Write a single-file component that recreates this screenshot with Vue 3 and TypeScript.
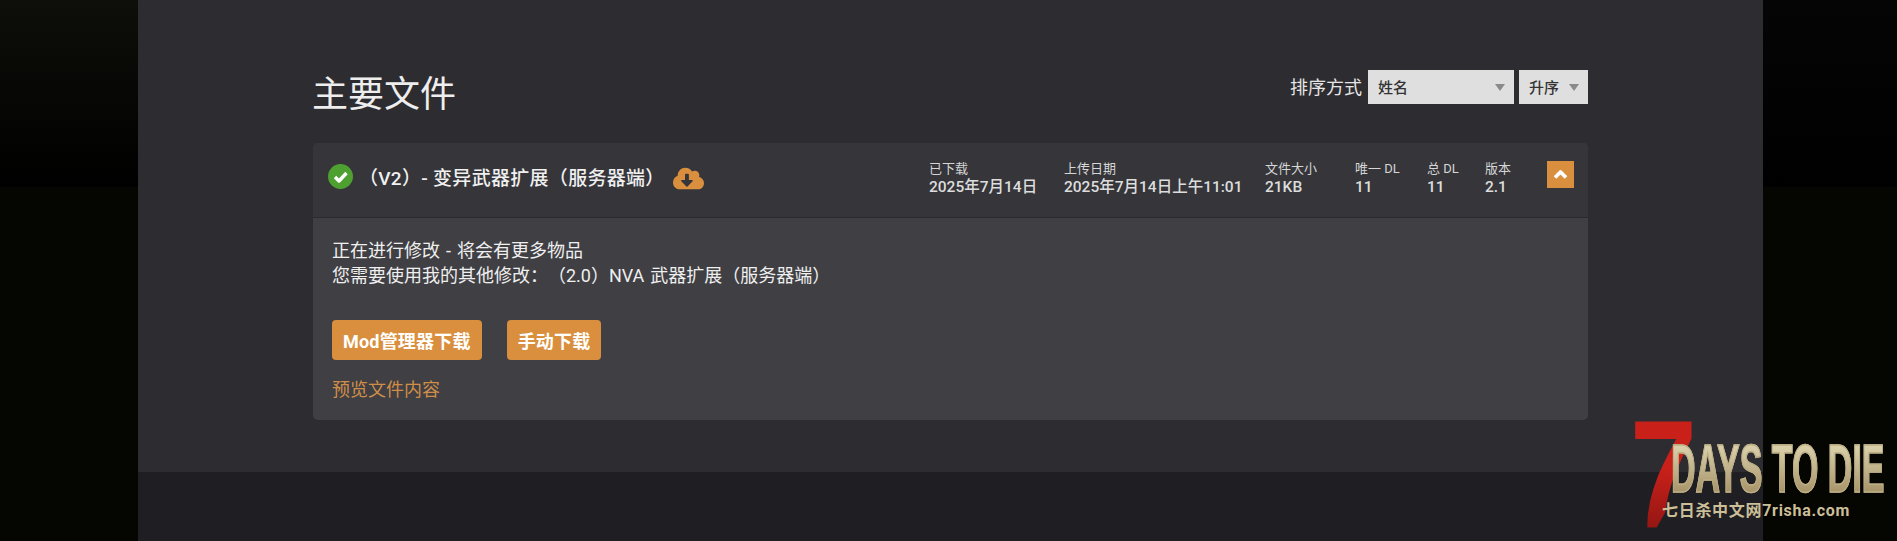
<script setup lang="ts">
interface MetaItem {
  label: string
  value: string
}

const meta: MetaItem[] = [
  { label: '已下载', value: '2025年7月14日' },
  { label: '上传日期', value: '2025年7月14日上午11:01' },
  { label: '文件大小', value: '21KB' },
  { label: '唯一 DL', value: '11' },
  { label: '总 DL', value: '11' },
  { label: '版本', value: '2.1' },
]
</script>

<template>
  <div class="page">
    <div class="side side-left" />
    <div class="center">
      <main class="content">
        <div class="head-row">
          <h2 class="title">主要文件</h2>
          <div class="sort">
            <span class="sort-label">排序方式</span>
            <div class="select select-name">
              <span>姓名</span>
              <i class="caret" />
            </div>
            <div class="select select-dir">
              <span>升序</span>
              <i class="caret" />
            </div>
          </div>
        </div>

        <section class="card">
          <header class="card-head">
            <div class="file-title">
              <svg class="ok-icon" viewBox="0 0 25 25">
                <circle cx="12.5" cy="12.5" r="12.5" fill="#4ea030" />
                <polyline points="7,13 11,17 18.5,9" fill="none" stroke="#fff" stroke-width="3.4" stroke-linejoin="round" />
              </svg>
              <span class="file-name">（V2）- 变异武器扩展（服务器端）</span>
              <svg class="cloud-icon" viewBox="0 0 640 512">
                <path
                  fill="#d98f3e"
                  d="M537.6 226.6c4.1-10.7 6.4-22.4 6.4-34.6 0-53-43-96-96-96-19.7 0-38.1 6-53.3 16.2C367 64.2 315.3 32 256 32c-88.4 0-160 71.6-160 160 0 2.7.1 5.4.2 8.1C40.2 219.8 0 273.2 0 336c0 79.5 64.5 144 144 144h368c70.7 0 128-57.3 128-128 0-61.9-44-113.6-102.4-125.4zm-132.9 88.7L299.3 420.7c-6.2 6.2-16.4 6.2-22.6 0L171.3 315.3c-10.1-10.1-2.9-27.3 11.3-27.3H248V176c0-8.8 7.2-16 16-16h48c8.8 0 16 7.2 16 16v112h65.4c14.2 0 21.4 17.2 11.3 27.3z"
                />
              </svg>
            </div>
            <div class="meta">
              <div v-for="m in meta" :key="m.label" class="meta-item">
                <span class="meta-label">{{ m.label }}</span>
                <span class="meta-value">{{ m.value }}</span>
              </div>
            </div>
            <div class="toggle">
              <svg viewBox="0 0 27 27" width="27" height="27">
                <polyline points="8,16.5 13.5,11 19,16.5" fill="none" stroke="#fff" stroke-width="3.6" stroke-linejoin="round" />
              </svg>
            </div>
          </header>
          <div class="card-body">
            <p class="desc">正在进行修改 - 将会有更多物品<br />您需要使用我的其他修改：（2.0）NVA 武器扩展（服务器端）</p>
            <div class="actions">
              <a class="btn">Mod管理器下载</a>
              <a class="btn">手动下载</a>
            </div>
            <a class="preview">预览文件内容</a>
          </div>
        </section>
      </main>
      <div class="footer-band" />
    </div>
    <div class="side side-right" />

    <div class="logo">
      <span class="logo-seven">7</span>
      <span class="logo-name">DAYS TO DIE</span>
      <span class="logo-site">七日杀中文网7risha.com</span>
    </div>
  </div>
</template>

<style>
html, body {
  margin: 0;
  background: #050502;
}
</style>

<style scoped>
.page {
  position: relative;
  display: grid;
  grid-template-columns: 138px 1625px 134px;
  width: 1897px;
  height: 541px;
  overflow: hidden;
  font-family: Roboto, "Noto Sans CJK SC", sans-serif;
  color: #ececec;
  text-spacing-trim: space-all;
}

.side {
  background: linear-gradient(180deg, #0e0e0a 0, #000 186px, #050502 187px);
}

.side-right {
  background: linear-gradient(180deg, #050505 0, #000 186px, #050502 187px);
}

.center {
  display: flex;
  flex-direction: column;
  min-width: 0;
}

.content {
  height: 472px;
  box-sizing: border-box;
  padding: 70px 175px 0;
  background: #2d2c31;
}

.footer-band {
  flex: 1;
  background: #1f1e23;
}

.head-row {
  display: flex;
  justify-content: space-between;
  align-items: flex-start;
  height: 73px;
}

.title {
  margin: 2px 0 0 -1px;
  font-size: 36px;
  font-weight: 400;
  line-height: 46px;
  color: #eeeeee;
}

.sort {
  display: flex;
  align-items: center;
  height: 34px;
}

.sort-label {
  font-size: 18px;
  margin: 0 6px 3px 0;
  color: #e6e6e6;
}

.select {
  position: relative;
  box-sizing: border-box;
  height: 34px;
  padding: 0 0 2px 10px;
  display: flex;
  align-items: center;
  background: #dfdfdf;
  color: #333;
  font-size: 15px;
  font-weight: 500;
}

.select-name {
  width: 146px;
  margin-right: 5px;
}

.select-dir {
  width: 69px;
}

.caret {
  position: absolute;
  right: 9px;
  top: 14px;
  width: 0;
  height: 0;
  border-left: 5px solid transparent;
  border-right: 5px solid transparent;
  border-top: 7px solid #8a8a8a;
}

.card {
  border-radius: 5px;
  overflow: hidden;
  background: #403f44;
}

.card-head {
  display: flex;
  align-items: center;
  height: 75px;
  padding: 0 13px 0 15px;
  background: #35353a;
  border-bottom: 1px solid #2b2b2f;
  box-sizing: border-box;
}

.file-title {
  display: flex;
  align-items: center;
  width: 601px;
  flex-shrink: 0;
  margin-top: -3px;
}

.ok-icon {
  width: 25px;
  height: 25px;
  margin-top: -5px;
}

.file-name {
  margin-left: 6px;
  font-size: 19px;
  font-weight: 500;
  line-height: 25px;
  letter-spacing: 0.3px;
  color: #f0f0f0;
}

.cloud-icon {
  width: 31px;
  height: 25px;
  margin-left: 8px;
}

.meta {
  display: grid;
  grid-template-columns: 135px 201px 90px 72px 58px 62px;
  flex-shrink: 0;
  margin-top: -4px;
}

.meta-item {
  display: flex;
  flex-direction: column;
}

.meta-label {
  font-size: 13px;
  line-height: 18px;
  color: #d6d6d6;
}

.meta-value {
  font-size: 15.5px;
  font-weight: 500;
  line-height: 19px;
  color: #dddddd;
  white-space: nowrap;
}

.toggle {
  width: 27px;
  height: 27px;
  margin-top: -11px;
  background: #d98f3e;
}

.card-body {
  padding: 20px 19px 0;
  height: 202px;
  box-sizing: border-box;
}

.desc {
  margin: 0;
  font-size: 18px;
  line-height: 25px;
  word-spacing: 1.5px;
  color: #efefef;
}

.actions {
  display: flex;
  gap: 25px;
  margin-top: 32px;
}

.btn {
  height: 40px;
  padding: 0 11px;
  display: flex;
  align-items: center;
  border-radius: 4px;
  background: #d98f3e;
  color: #fff;
  font-size: 18px;
  font-weight: 700;
  letter-spacing: 0.2px;
}

.preview {
  display: block;
  margin-top: 16px;
  font-size: 18px;
  line-height: 28px;
  color: #cf8e48;
}

/* watermark sits over the page */
.logo {
  position: absolute;
  left: 1630px;
  top: 415px;
  width: 267px;
  height: 126px;
  pointer-events: none;
}

.logo-seven {
  position: absolute;
  left: 0;
  top: -1px;
  font-family: "Liberation Sans", sans-serif;
  font-size: 154px;
  font-weight: 700;
  line-height: 122px;
  background: linear-gradient(180deg, #c9201a 45%, #8c1512 100%);
  -webkit-background-clip: text;
  background-clip: text;
  -webkit-text-fill-color: transparent;
  clip-path: polygon(0 0, 100% 0, 100% 35%, 40% 93%, 24% 100%, 0 100%);
  transform: scaleX(0.78);
  transform-origin: left top;
}

.logo-name {
  position: absolute;
  left: 41px;
  top: 19px;
  font-family: "Liberation Sans", sans-serif;
  font-size: 68px;
  font-weight: 700;
  line-height: 68px;
  white-space: nowrap;
  background: linear-gradient(180deg, #d8cfa9 20%, #a8946a 85%);
  -webkit-background-clip: text;
  background-clip: text;
  -webkit-text-fill-color: transparent;
  -webkit-text-stroke: 1.5px #bdae84;
  transform: scaleX(0.5);
  transform-origin: left top;
}

.logo-site {
  position: absolute;
  left: 32px;
  top: 87px;
  font-size: 16px;
  font-weight: 700;
  line-height: 18px;
  letter-spacing: 0.7px;
  white-space: nowrap;
  color: #cbbf98;
}

a {
  text-decoration: none;
}
</style>
